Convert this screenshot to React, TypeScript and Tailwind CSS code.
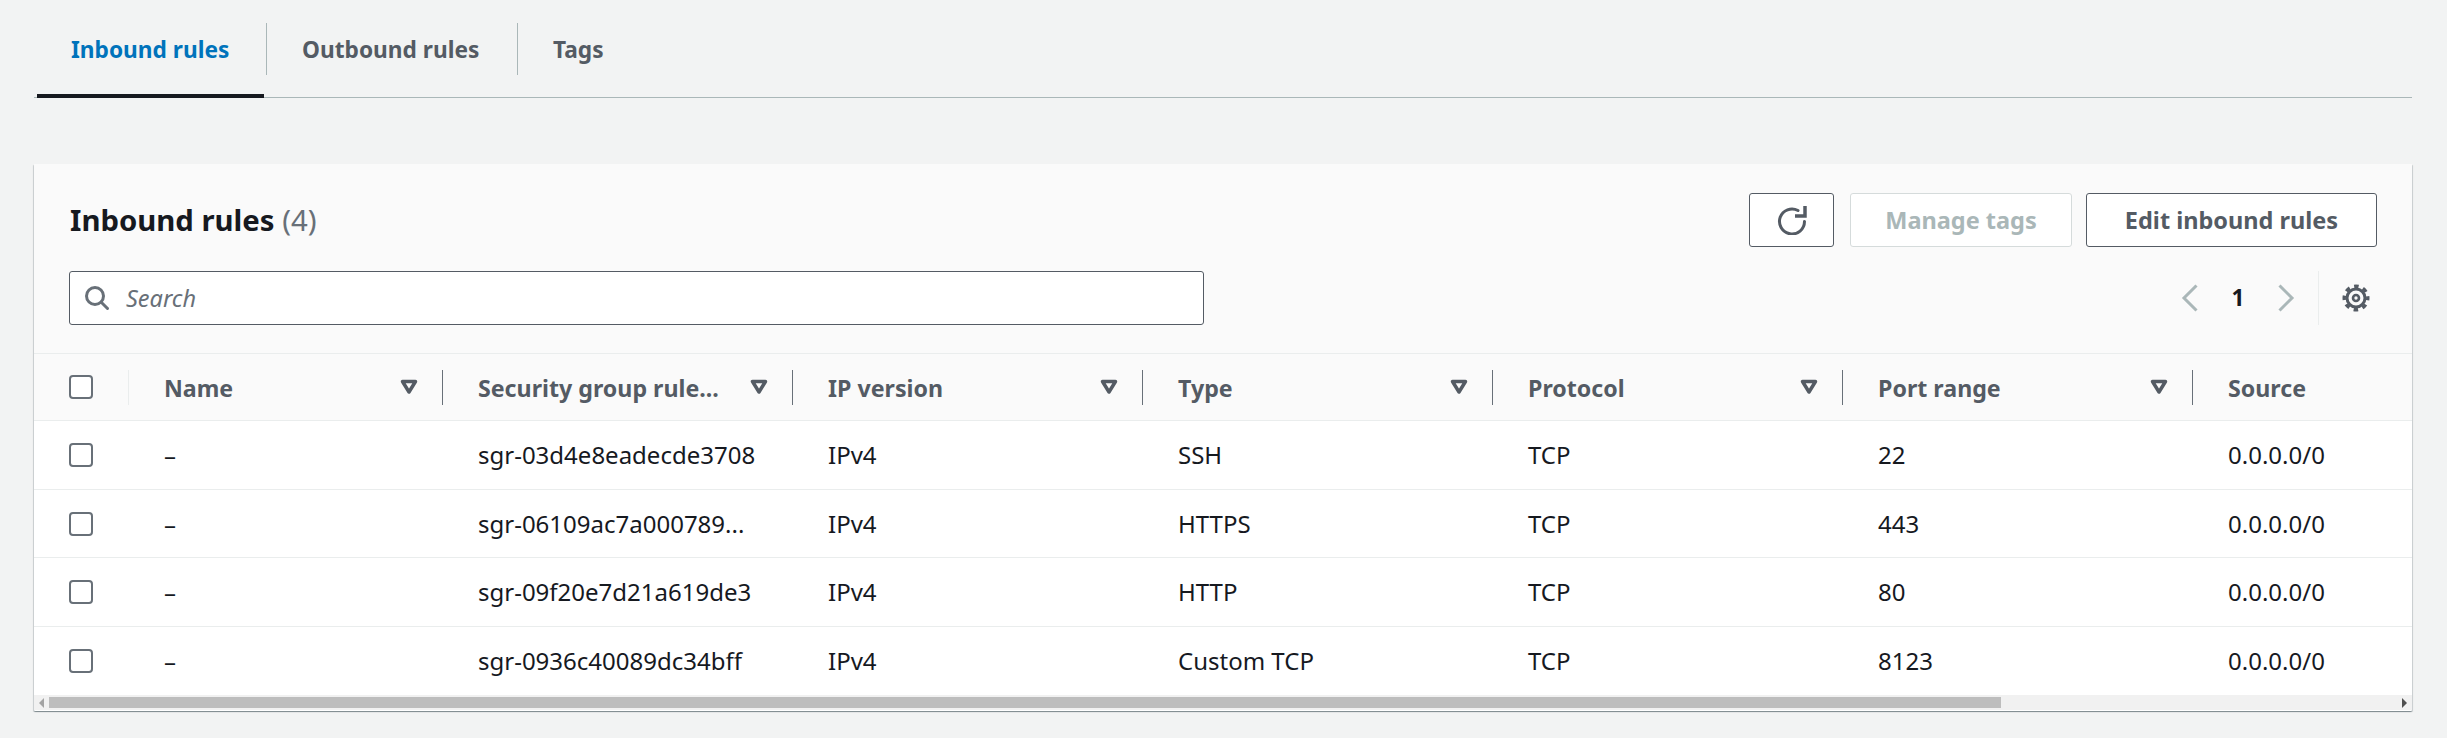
const rows = [
  { id: "sgr-03d4e8eadecde3708", type: "SSH", port: "22" },
  { id: "sgr-06109ac7a000789...", type: "HTTPS", port: "443" },
  { id: "sgr-09f20e7d21a619de3", type: "HTTP", port: "80" },
  { id: "sgr-0936c40089dc34bff", type: "Custom TCP", port: "8123" },
];

const columns = ["Security group rule...", "IP version", "Type", "Protocol", "Port range"];

function Checkbox() {
  return <div className="w-[24px] h-[24px] shrink-0 rounded-[4px] border-2 border-[#687078] bg-white" />;
}

function FilterIcon() {
  return (
    <svg width="18" height="16" viewBox="0 0 18 16" fill="none" className="shrink-0">
      <path d="M2.5 2.5h13L9 13z" stroke="#545b64" strokeWidth="3.5" strokeLinejoin="round" />
    </svg>
  );
}

function RefreshIcon() {
  return (
    <svg width="30" height="30" viewBox="0 0 30 30" fill="none">
      <path d="M27.5 16.5A12.5 12.5 0 1 1 21 5.5" stroke="#545b64" strokeWidth="3" strokeLinecap="round" />
      <path d="M28 1v10h-10" stroke="#545b64" strokeWidth="3.5" strokeLinejoin="miter" />
    </svg>
  );
}

function GearIcon() {
  return (
    <svg width="30" height="30" viewBox="0 0 30 30" fill="none" stroke="#545b64">
      <circle cx="15" cy="15" r="11.8" strokeWidth="3.4" strokeDasharray="4.6 4.67" strokeDashoffset="2.3" />
      <circle cx="15" cy="15" r="9" strokeWidth="3" />
      <circle cx="15" cy="15" r="3" strokeWidth="2.6" />
    </svg>
  );
}

function SearchIcon() {
  return (
    <svg width="26" height="26" viewBox="0 0 26 26" fill="none" stroke="#687078" strokeWidth="3" strokeLinecap="round">
      <circle cx="11" cy="11" r="8.5" />
      <path d="M17.5 17.5l6 6" />
    </svg>
  );
}

function Chevron({ dir }: { dir: "left" | "right" }) {
  return (
    <svg width="18" height="28" viewBox="0 0 18 28" fill="none" stroke="#aab7b8" strokeWidth="3">
      <path d={dir === "left" ? "M15.5 1.5L3 14l12.5 12.5" : "M2.5 1.5L15 14 2.5 26.5"} />
    </svg>
  );
}

export default function App() {
  return (
    <div className="h-[738px] bg-[#f2f3f3] pl-[34px] pr-[35px] text-[24px] leading-[32px] text-[#16191f] overflow-hidden font-['Noto_Sans',sans-serif]">
      {/* Tabs */}
      <div className="flex h-[98px] border-b border-[#aab7b8] text-[22.7px] font-bold text-[#545b64]">
        <div className="relative w-[232px] h-[98px] pl-[37px] pt-[34px] text-[#0073bb]">
          Inbound rules
          <div className="absolute left-[3px] right-[2px] bottom-0 h-[4px] bg-[#16191f]" />
        </div>
        <div className="w-[251px] h-[52px] mt-[23px] pl-[35px] pt-[11px] border-l border-[#aab7b8]">Outbound rules</div>
        <div className="h-[52px] mt-[23px] pl-[35px] pt-[11px] border-l border-[#aab7b8]">Tags</div>
      </div>

      {/* Card */}
      <div className="mt-[66px] h-[547px] bg-white overflow-hidden rounded-[1px] shadow-[0_1px_1px_0_rgba(0,28,36,0.3),1px_1px_1px_0_rgba(0,28,36,0.15),-1px_1px_1px_0_rgba(0,28,36,0.15)]">
        <div className="h-[190px] bg-[#fafafa] border-b border-[#eaeded] pl-[35px] pr-[35px] pt-[29px]">
          <div className="flex justify-between h-[54px]">
            <h2 className="ml-[1px] text-[29.3px] leading-[54px] font-bold">
              Inbound rules <span className="font-normal text-[#687078]">(4)</span>
            </h2>
            <div className="flex gap-[14px] text-[23.5px] font-bold">
              <button className="w-[85px] h-[54px] flex items-center justify-center rounded-[3px] border border-[#545b64] bg-white">
                <RefreshIcon />
              </button>
              <button className="ml-[2px] w-[222px] h-[54px] rounded-[3px] border border-[#d5dbdb] bg-white text-[#aab7b8]">Manage tags</button>
              <button className="w-[291px] h-[54px] rounded-[3px] border border-[#545b64] bg-white text-[#545b64]">Edit inbound rules</button>
            </div>
          </div>
          <div className="flex justify-between mt-[24px] h-[54px]">
            <div className="w-[1135px] flex items-center gap-[16px] pl-[14px] rounded-[3px] border border-[#545b64] bg-white">
              <SearchIcon />
              <span className="italic text-[23.5px] text-[#687078]">Search</span>
            </div>
            <div className="flex items-center pr-[6px]">
              <Chevron dir="left" />
              <span className="w-[78px] text-center text-[22.7px] font-bold">1</span>
              <Chevron dir="right" />
              <div className="ml-[23px] h-[54px] flex items-center pl-[22px] border-l border-[#eaeded]">
                <GearIcon />
              </div>
            </div>
          </div>
        </div>

        <div className="flex h-[67px] bg-[#fafafa] border-b border-[#eaeded] text-[23.2px] font-bold text-[#545b64] items-center whitespace-nowrap">
          <div className="w-[95px] h-[35px] pl-[35px] flex items-center border-r border-[#eaeded]">
            <Checkbox />
          </div>
          <div className="w-[314px] h-[35px] pl-[35px] pr-[24px] flex items-center justify-between border-r border-[#687078]">
            <span className="pt-[2px]">Name</span>
            <FilterIcon />
          </div>
          {columns.map((c) => (
            <div key={c} className="w-[350px] h-[35px] pl-[35px] pr-[24px] flex items-center justify-between border-r border-[#687078]">
              <span className="pt-[2px]">{c}</span>
              <FilterIcon />
            </div>
          ))}
          <div className="pl-[35px] pt-[2px]">Source</div>
        </div>

        {rows.map((r, i) => (
          <div key={r.id} className={`flex items-center h-[68.5px] pt-[1px] whitespace-nowrap ${i < 3 ? "border-b border-[#eaeded]" : ""}`}>
            <div className="w-[95px] pl-[35px]">
              <Checkbox />
            </div>
            <div className="w-[314px] pl-[35px]">–</div>
            <div className="w-[350px] pl-[35px]">{r.id}</div>
            <div className="w-[350px] pl-[35px]">IPv4</div>
            <div className="w-[350px] pl-[35px]">{r.type}</div>
            <div className="w-[350px] pl-[35px]">TCP</div>
            <div className="w-[350px] pl-[35px]">{r.port}</div>
            <div className="pl-[35px]">0.0.0.0/0</div>
          </div>
        ))}

        {/* Scrollbar */}
        <div className="flex items-center h-[15px] bg-[#f1f1f1]">
          <div className="w-[15px] flex justify-center">
            <div className="border-y-[5px] border-y-transparent border-r-[5px] border-r-[#a3a3a3]" />
          </div>
          <div className="w-[1952px] h-[11px] bg-[#bdbdbd]" />
          <div className="flex-1" />
          <div className="w-[15px] flex justify-center">
            <div className="border-y-[5px] border-y-transparent border-l-[5px] border-l-[#505050]" />
          </div>
        </div>
      </div>
    </div>
  );
}
